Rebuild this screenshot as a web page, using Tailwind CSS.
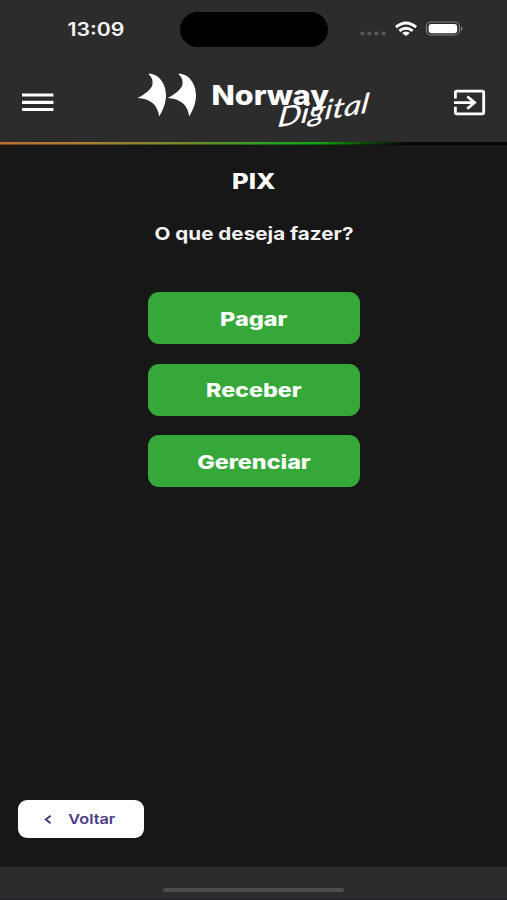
<!DOCTYPE html>
<html lang="pt-BR">
<head>
<meta charset="utf-8">
<meta name="viewport" content="width=device-width, initial-scale=1">
<title>Norway Digital - PIX</title>
<script src="https://cdn.jsdelivr.net/npm/@tailwindcss/browser@4"></script>
</head>
<body class="bg-[#171717] font-['Inter',sans-serif] text-white">
<div class="flex h-[900px] w-[507px] flex-col overflow-hidden bg-[#171717]">
  <header class="flex h-[142px] shrink-0 flex-col bg-[#2c2c2c]">
    <div class="flex h-[59px] items-start">
      <svg class="ml-[60px] mt-[12px] h-9 w-[120px]" viewBox="60 12 120 36">
        <text x="67.5" y="35.9" font-size="18" font-weight="600" fill="#f4f4f4" textLength="57" lengthAdjust="spacingAndGlyphs">13:09</text>
      </svg>
      <div class="mt-[12px] h-[35px] w-[148px] rounded-full bg-black"></div>
      <svg class="ml-[22px] mt-[12px] h-[35px] w-[130px]" viewBox="350 12 130 35" fill="none">
        <g fill="#5b5b5b"><circle cx="362.4" cy="33.5" r="2.1"/><circle cx="369.4" cy="33.5" r="2.1"/><circle cx="376.5" cy="33.5" r="2.1"/><circle cx="383.5" cy="33.5" r="2.1"/></g>
        <g stroke="#fff" stroke-width="2.8"><path d="M395.9 27.2Q406 18.9 416.1 27.2"/><path d="M399.4 30.9Q406 25.6 412.6 30.9"/></g>
        <path fill="#fff" d="M402.1 32.9Q406 29.9 409.9 32.9L406 35.9Z"/>
        <rect x="426.4" y="22" width="33.2" height="13" rx="4.5" stroke="#818181" stroke-width="1.1"/>
        <rect x="428.6" y="23.9" width="28.6" height="9.4" rx="3" fill="#fff"/>
        <path d="M461 26.3Q464 28.6 461 30.9Z" fill="#858585"/>
      </svg>
    </div>
    <div class="flex h-[83px] items-start">
      <button aria-label="Menu" class="ml-[22px] mt-[34px]">
        <svg class="block h-[19px] w-[32px]" viewBox="22 93 32 19" fill="#fff"><path d="M22 93.4H53.4V96.5H22ZM22 100.8H53.4V103.9H22ZM22 108H53.4V111.1H22Z"/></svg>
      </button>
      <svg class="ml-[76px] mt-[6px] h-[75px] w-[250px]" viewBox="130 65 250 75">
        <path id="fin" fill="#fff" d="M148.2 73.8C157.5 73 166 82.5 166 95.5C165.9 103 163 110 159.2 116.5C157.8 105 151 98.6 137.3 97.9C143.5 95.8 149.5 90.5 152 86.3C153.4 82 152.5 77.5 148.2 73.8Z"/>
        <use href="#fin" x="30"/>
        <g transform="translate(277 127.2) rotate(-9) skewX(-16)">
          <text x="0" y="0" font-family="Lato, sans-serif" font-style="italic" font-size="27" font-weight="500" stroke="#2c2c2c" stroke-width="3" paint-order="stroke" fill="#fff" textLength="92" lengthAdjust="spacingAndGlyphs">Digital</text>
        </g>
        <text x="211.5" y="105.2" font-size="27" font-weight="800" fill="#fff" textLength="117.5" lengthAdjust="spacingAndGlyphs">Norway</text>
      </svg>
      <button aria-label="Sair" class="ml-[72px] mt-[29px]">
        <svg class="block h-[30px] w-[34px]" viewBox="452 88 34 30" fill="none" stroke="#fff" stroke-width="2.8">
          <path d="M455.4 98.5V92.6Q455.4 91.2 456.8 91.2H482.3Q483.7 91.2 483.7 92.6V112.5Q483.7 113.9 482.3 113.9H456.8Q455.4 113.9 455.4 112.5V106.7"/>
          <path d="M454 102.6H474.5M467.3 96.5L474.6 102.6L467.3 108.7"/>
        </svg>
      </button>
    </div>
  </header>
  <div class="h-[3px] shrink-0 border-b border-black/40 bg-[linear-gradient(90deg,#bb7132_0%,#a9802c_18%,#75892a_36%,#29a51e_53%,#16a30d_63%,#0b4b0a_72%,#080808_80%,#080808_100%)]"></div>
  <main class="flex flex-1 flex-col items-center">
    <h1 class="mt-[20px] h-8">
      <svg class="h-8 w-[60px]" viewBox="224 165 60 32"><text x="232" y="189.3" font-size="21" font-weight="800" fill="#fff" textLength="43.5" lengthAdjust="spacingAndGlyphs">PIX</text></svg>
    </h1>
    <p class="mt-[20px] h-9">
      <svg class="h-9 w-[220px]" viewBox="144 217 220 36"><text x="154.5" y="240.3" font-size="17.8" font-weight="700" fill="#f2f2f2" textLength="199" lengthAdjust="spacingAndGlyphs">O que deseja fazer?</text></svg>
    </p>
    <div class="mt-[39.3px] flex flex-col gap-[19.2px]">
      <button class="h-[52.2px] w-[212px] rounded-[11px] bg-[#35a839]">
        <svg class="h-full w-full" viewBox="148 292.3 212 52.2"><text x="220" y="326.3" font-size="19" font-weight="800" fill="#fff" textLength="67.5" lengthAdjust="spacingAndGlyphs">Pagar</text></svg>
      </button>
      <button class="h-[52.2px] w-[212px] rounded-[11px] bg-[#35a839]">
        <svg class="h-full w-full" viewBox="148 363.7 212 52.2"><text x="206" y="397.2" font-size="19" font-weight="800" fill="#fff" textLength="95.5" lengthAdjust="spacingAndGlyphs">Receber</text></svg>
      </button>
      <button class="h-[52.2px] w-[212px] rounded-[11px] bg-[#35a839]">
        <svg class="h-full w-full" viewBox="148 435.1 212 52.2"><text x="197.2" y="468.8" font-size="19" font-weight="800" fill="#fff" textLength="113.5" lengthAdjust="spacingAndGlyphs">Gerenciar</text></svg>
      </button>
    </div>
    <button class="mb-[29px] ml-[18px] mt-auto h-[38.5px] w-[125.5px] self-start rounded-[9px] bg-white">
      <svg class="h-full w-full" viewBox="18 799.5 125.5 38.5">
        <path d="M50.6 815.2L45.7 819L50.6 822.8" fill="none" stroke="#43307f" stroke-width="1.8"/>
        <text x="68.3" y="823.3" font-size="13.5" font-weight="600" fill="#4b3a82" textLength="47" lengthAdjust="spacingAndGlyphs">Voltar</text>
      </svg>
    </button>
  </main>
  <footer class="flex h-[33px] shrink-0 justify-center border-b border-[#211c23] bg-[#2c2c2c] pt-5">
    <div class="mt-[0.5px] h-[4.5px] w-[181px] rounded-full bg-[#4d4d4d]"></div>
  </footer>
</div>
</body>
</html>
